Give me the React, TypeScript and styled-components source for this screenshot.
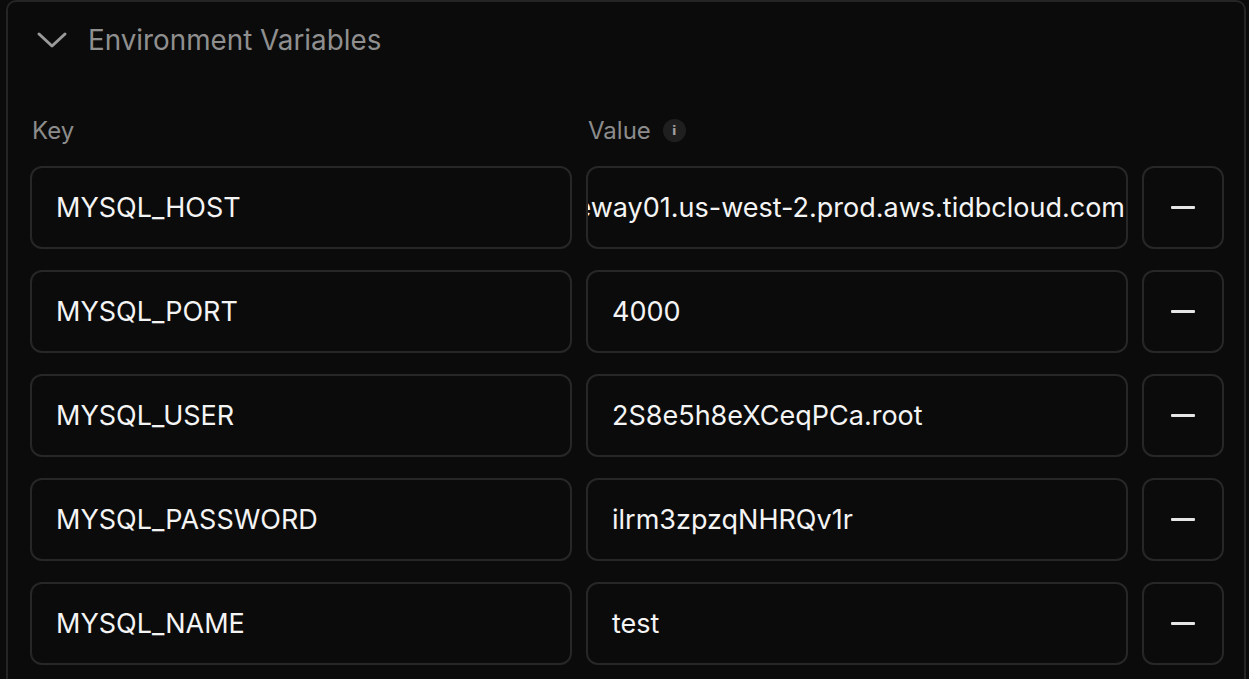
import styled, { createGlobalStyle } from "styled-components";

const GlobalStyle = createGlobalStyle`
  html, body {
    margin: 0;
    padding: 0;
    background: #0b0b0b;
  }
  body {
    font-family: Inter, "Liberation Sans", Arial, sans-serif;
  }
`;

const Page = styled.div`
  width: 1249px;
  height: 679px;
  overflow: hidden;
  background: #0b0b0b;
  padding-left: 6px;
  box-sizing: border-box;
`;

const Panel = styled.section`
  width: 1240px;
  height: 720px;
  box-sizing: border-box;
  border: 2px solid #252525;
  border-radius: 10px;
  background: #0b0b0b;
  padding: 18px 20px 0 22px;
`;

const Header = styled.div`
  display: flex;
  align-items: center;
  gap: 20px;
  height: 40px;
  padding-left: 6px;
  margin-bottom: 55px;
  color: #8f8f8f;
  font-family: Inter, "Liberation Sans", sans-serif;
  font-size: 27.8px;
  font-weight: 400;
`;

const Grid = styled.div`
  display: grid;
  grid-template-columns: 542px 542px 82px;
  column-gap: 14px;
  row-gap: 21px;
`;

const Label = styled.div`
  display: flex;
  align-items: center;
  gap: 12px;
  height: 30px;
  padding-left: 2px;
  color: #8c8c8c;
  font-family: Inter, "Liberation Sans", sans-serif;
  font-size: 24px;
`;

const InfoDot = styled.span`
  display: inline-flex;
  align-items: center;
  justify-content: center;
  width: 23px;
  height: 23px;
  border-radius: 50%;
  background: #1f1f1f;
  color: #a0a0a0;
  font-family: "DejaVu Sans", sans-serif;
  font-size: 13px;
  font-weight: 700;
`;

const Field = styled.div<{ $scrolled?: boolean }>`
  height: 83px;
  box-sizing: border-box;
  border: 2px solid #272727;
  border-radius: 12px;
  display: flex;
  align-items: center;
  justify-content: ${(p) => (p.$scrolled ? "flex-end" : "flex-start")};
  padding: ${(p) => (p.$scrolled ? "0 1px" : "0 24px")};
  overflow: hidden;
  white-space: nowrap;
  color: #f4f4f4;
  font-family: Inter, "Liberation Sans", sans-serif;
  font-size: 27px;
`;

const RemoveButton = styled.button`
  height: 83px;
  box-sizing: border-box;
  border: 2px solid #272727;
  border-radius: 12px;
  background: transparent;
  display: flex;
  align-items: center;
  justify-content: center;
  padding: 0;
  cursor: pointer;
`;

const Dash = styled.span`
  display: block;
  width: 24px;
  height: 3px;
  border-radius: 1px;
  background: #e6e6e6;
`;

const vars = [
  { key: "MYSQL_HOST", value: "gateway01.us-west-2.prod.aws.tidbcloud.com" },
  { key: "MYSQL_PORT", value: "4000" },
  { key: "MYSQL_USER", value: "2S8e5h8eXCeqPCa.root" },
  { key: "MYSQL_PASSWORD", value: "ilrm3zpzqNHRQv1r" },
  { key: "MYSQL_NAME", value: "test" },
];

export default function App() {
  return (
    <Page>
      <GlobalStyle />
      <Panel>
        <Header>
          <svg width="32" height="20" viewBox="0 0 32 20" fill="none">
            <path d="M3 4 L16 16 L29 4" stroke="#9a9a9a" strokeWidth="3" strokeLinecap="round" strokeLinejoin="round" />
          </svg>
          Environment Variables
        </Header>
        <Grid>
          <Label>Key</Label>
          <Label>
            Value
            <InfoDot>i</InfoDot>
          </Label>
          <div />
          {vars.map((v) => (
            <>
              <Field key={v.key}>{v.key}</Field>
              <Field $scrolled={v.value.length > 36}>{v.value}</Field>
              <RemoveButton aria-label="Remove">
                <Dash />
              </RemoveButton>
            </>
          ))}
        </Grid>
      </Panel>
    </Page>
  );
}
